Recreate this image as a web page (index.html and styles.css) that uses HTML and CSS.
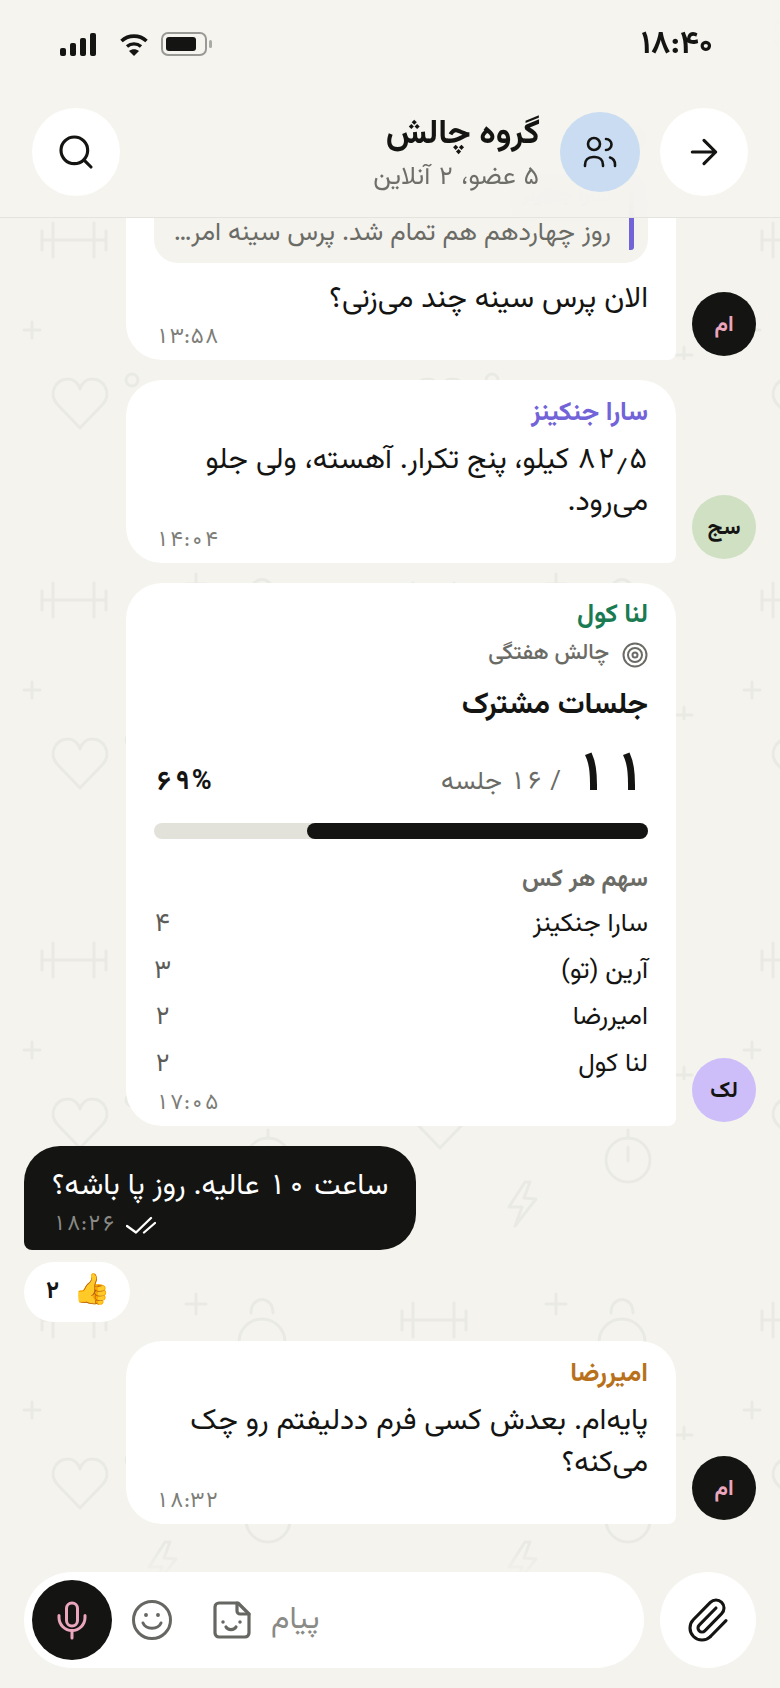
FILE: index.html
```html
<!DOCTYPE html>
<html lang="fa" dir="rtl">
<head>
    <meta charset="UTF-8">
    <meta name="viewport" content="width=device-width, initial-scale=1.0">
    <title>گروه چالش</title>
    <link rel="stylesheet" href="styles.css">
</head>
<body>
    <div class="screen">
        <!-- faint gym doodles behind the chat -->
        <svg class="doodles" width="780" height="1688" aria-hidden="true">
            <defs>
                <pattern id="tile" width="360" height="360" patternUnits="userSpaceOnUse">
                    <g fill="none" stroke="#eaeae4" stroke-width="3" stroke-linecap="round" stroke-linejoin="round">
                        <path d="M42 231v19M53 223v34M94 223v34M106 231v19M42 240h64"/>
                        <path d="M24 330h16M32 322v16M186 224h20M196 214v20M316 355h16M324 347v16"/>
                        <path d="M80 68 57 44C48 33 56 19 68 19c6 0 10 4 12 10 2-6 6-10 12-10 12 0 20 14 11 25z"/>
                        <circle cx="132" cy="20" r="6"/>
                        <circle cx="268" cy="80" r="22"/>
                        <path d="M268 58v-8M268 67v14"/>
                        <path d="M165 102 149 127h13l-7 19 21-27-12-1 6-16z"/>
                        <path d="M251 233c0-18 22-18 22 0"/>
                        <circle cx="262" cy="262" r="23"/>
                    </g>
                </pattern>
            </defs>
            <rect width="780" height="1688" fill="url(#tile)"/>
        </svg>

        <header class="topbar">
            <div class="status">
                <div class="status-icons">
                    <div class="signal">
                        <span class="s1"></span><span class="s2"></span><span class="s3"></span><span class="s4"></span>
                    </div>
                    <svg class="wifi" width="28" height="23" viewBox="0 0 28 23">
                        <path d="M1.5 8C8.5 1.5 19.5 1.5 26.5 8" fill="none" stroke="#141412" stroke-width="3.6"/>
                        <path d="M7 13.5c4-3.5 10-3.5 14 0" fill="none" stroke="#141412" stroke-width="3.4"/>
                        <path d="M14 23l-5-5c3-2.5 7-2.5 10 0z" fill="#141412"/>
                    </svg>
                    <div class="battery"><span class="battery-level"></span></div>
                    <span class="battery-cap"></span>
                </div>
                <span class="clock">۱۸:۴۰</span>
            </div>
            <div class="chat-head">
                <button class="round-btn">
                    <svg width="40" height="40" viewBox="0 0 24 24" fill="none" stroke="#141412" stroke-width="1.9" stroke-linecap="round" stroke-linejoin="round">
                        <path d="M5 12h14M12 5l7 7-7 7"/>
                    </svg>
                </button>
                <div class="group-pic">
                    <svg width="36" height="36" viewBox="0 0 36 36" fill="none" stroke="#141412" stroke-width="2.6" stroke-linecap="round">
                        <circle cx="12" cy="10" r="6"/>
                        <path d="M3 32v-1c0-5 3-8 8-8h2c5 0 8 3 8 8v1"/>
                        <path d="M24 5a5.5 5.5 0 0 1 0 11"/>
                        <path d="M28 23.5c3 1 5 3.5 5 7V32"/>
                    </svg>
                </div>
                <div class="chat-title">
                    <h1>گروه چالش</h1>
                    <p>۵ عضو، ۲ آنلاین</p>
                </div>
                <button class="round-btn search-btn">
                    <svg width="40" height="40" viewBox="0 0 24 24" fill="none" stroke="#141412" stroke-width="1.9" stroke-linecap="round">
                        <circle cx="11" cy="11" r="8"/>
                        <path d="M21 21l-4.3-4.3"/>
                    </svg>
                </button>
            </div>
        </header>

        <main class="messages">
            <div class="row">
                <div class="avatar av-dark">ام</div>
                <div class="bubble">
                    <div class="sender c-amir">امیررضا</div>
                    <div class="quote">
                        <div class="quote-body">
                            <div class="quote-name">سارا جنکینز</div>
                            <div class="quote-text">روز چهاردهم هم تمام شد. پرس سینه امر…</div>
                        </div>
                    </div>
                    <div class="text">الان پرس سینه چند می‌زنی؟</div>
                    <div class="time">۱۳:۵۸</div>
                </div>
            </div>

            <div class="row">
                <div class="avatar av-green">سج</div>
                <div class="bubble">
                    <div class="sender c-sara">سارا جنکینز</div>
                    <div class="text">۸۲٫۵ کیلو، پنج تکرار. آهسته، ولی جلو می‌رود.</div>
                    <div class="time">۱۴:۰۴</div>
                </div>
            </div>

            <div class="row">
                <div class="avatar av-purple">لک</div>
                <div class="bubble">
                    <div class="sender sender-card c-lena">لنا کول</div>
                    <div class="kicker">
                        <svg width="26" height="26" viewBox="0 0 26 26" fill="none" stroke="#6b6b66" stroke-width="2">
                            <circle cx="13" cy="13" r="11.5"/>
                            <circle cx="13" cy="13" r="7"/>
                            <circle cx="13" cy="13" r="2.5"/>
                        </svg>
                        <span>چالش هفتگی</span>
                    </div>
                    <div class="card-title">جلسات مشترک</div>
                    <div class="stats">
                        <div class="stats-count">
                            <span class="big-num">۱۱</span>
                            <span class="of-total">/ ۱۶ جلسه</span>
                        </div>
                        <span class="percent">۶۹%</span>
                    </div>
                    <div class="progress"><div class="progress-fill" style="width: 69%"></div></div>
                    <div class="share-title">سهم هر کس</div>
                    <div class="share-row"><span>سارا جنکینز</span><span class="share-num">۴</span></div>
                    <div class="share-row"><span>آرین (تو)</span><span class="share-num">۳</span></div>
                    <div class="share-row"><span>امیررضا</span><span class="share-num">۲</span></div>
                    <div class="share-row"><span>لنا کول</span><span class="share-num">۲</span></div>
                    <div class="time">۱۷:۰۵</div>
                </div>
            </div>

            <div class="mine">
                <div class="mine-text">ساعت ۱۰ عالیه. روز پا باشه؟</div>
                <div class="mine-meta">
                    <span>۱۸:۲۶</span>
                    <svg width="30" height="18" viewBox="0 0 30 18" fill="none" stroke="#fff" stroke-width="2.3" stroke-linecap="round" stroke-linejoin="round">
                        <path d="M1 10l9 6.5L25 2"/>
                        <path d="M18 16.5 29 7"/>
                    </svg>
                </div>
            </div>
            <div class="reaction"><span class="reaction-emoji">👍</span><b>۲</b></div>

            <div class="row">
                <div class="avatar av-dark">ام</div>
                <div class="bubble">
                    <div class="sender c-amir">امیررضا</div>
                    <div class="text">پایه‌ام. بعدش کسی فرم ددلیفتم رو چک می‌کنه؟</div>
                    <div class="time">۱۸:۳۲</div>
                </div>
            </div>
        </main>

        <footer class="composer">
            <button class="attach-btn">
                <svg width="48" height="48" viewBox="0 0 24 24" fill="none" stroke="#141412" stroke-width="1.55" stroke-linecap="round" stroke-linejoin="round">
                    <path d="M13.234 20.252 21 12.3"/>
                    <path d="m16 6-8.414 8.586a2 2 0 0 0 0 2.828 2 2 0 0 0 2.828 0l8.414-8.586a4 4 0 0 0 0-5.656 4 4 0 0 0-5.656 0l-8.415 8.585a6 6 0 1 0 8.486 8.486"/>
                </svg>
            </button>
            <div class="input-pill">
                <button class="mic-btn">
                    <svg width="40" height="40" viewBox="0 0 40 40" fill="none" stroke="#eba5bd" stroke-width="3" stroke-linecap="round">
                        <rect x="14.5" y="3" width="11" height="23" rx="5.5"/>
                        <path d="M7 15.5v2a13 13 0 0 0 26 0v-2"/>
                        <path d="M20 31v7"/>
                    </svg>
                </button>
                <svg class="smile" width="40" height="40" viewBox="0 0 40 40" fill="none" stroke="#666662" stroke-width="3" stroke-linecap="round">
                    <circle cx="20" cy="20" r="18.5"/>
                    <path d="M11 23c3 7 15 7 18 0"/>
                    <circle cx="14" cy="15" r="1.2" fill="#666662" stroke-width="1.5"/>
                    <circle cx="26" cy="15" r="1.2" fill="#666662" stroke-width="1.5"/>
                </svg>
                <svg class="sticker" width="38" height="38" viewBox="0 0 38 38" fill="none" stroke="#666662" stroke-width="3.2" stroke-linecap="round" stroke-linejoin="round">
                    <path d="M6 2h19l11 11v19a4 4 0 0 1-4 4H6a4 4 0 0 1-4-4V6a4 4 0 0 1 4-4z"/>
                    <path d="M24 2v8a3 3 0 0 0 3 3h9"/>
                    <path d="M13 26c2 3.5 8 3.5 10 0"/>
                    <circle cx="10" cy="21" r="1" fill="#666662" stroke-width="1.5"/>
                    <circle cx="27" cy="21" r="1" fill="#666662" stroke-width="1.5"/>
                </svg>
                <span class="placeholder">پیام</span>
            </div>
        </footer>
    </div>
</body>
</html>
```

FILE: styles.css
```css
* {
    box-sizing: border-box;
}

body {
    margin: 0;
    background-color: #f4f3ee;
    color: #141412;
    font-family: "Vazirmatn", "Noto Sans Arabic", sans-serif;
    font-variant-numeric: tabular-nums;
}

.screen {
    position: relative;
    width: 780px;
    height: 1688px;
    overflow: hidden;
    display: flex;
    flex-direction: column;
}

.doodles {
    position: absolute;
    top: 0;
    left: 0;
}

/* top bar, floats over the chat */
.topbar {
    position: absolute;
    top: 0;
    left: 0;
    width: 100%;
    height: 218px;
    z-index: 2;
    background: rgba(244, 243, 238, 0.94);
    backdrop-filter: blur(14px);
    border-bottom: 1px solid #e4e3dd;
}

.status {
    direction: ltr;
    height: 88px;
    display: flex;
    align-items: center;
    justify-content: space-between;
    padding: 0 67px 0 60px;
}

.status-icons {
    display: flex;
    align-items: center;
}

.signal {
    display: flex;
    align-items: flex-end;
    gap: 4px;
    height: 23px;
    margin-right: 24px;
}

.signal span {
    width: 6px;
    background: #141412;
    border-radius: 2px;
}

.s1 { height: 8px; }
.s2 { height: 13px; }
.s3 { height: 18px; }
.s4 { height: 23px; }

.wifi {
    margin-right: 13px;
}

.battery {
    width: 46px;
    height: 24px;
    border: 2px solid #999995;
    border-radius: 7px;
    padding: 3px;
}

.battery-level {
    display: block;
    width: 30px;
    height: 14px;
    background: #141412;
    border-radius: 3px;
}

.battery-cap {
    width: 3px;
    height: 8px;
    margin-left: 2px;
    background: #aaaaa6;
    border-radius: 2px;
}

.clock {
    padding-top: 2px;
    font-size: 32px;
    font-weight: 700;
    font-variant-numeric: normal;
    line-height: 1;
}

.chat-head {
    height: 88px;
    margin-top: 20px;
    padding: 0 32px;
    display: flex;
    align-items: center;
}

.round-btn {
    width: 88px;
    height: 88px;
    border: none;
    border-radius: 50%;
    background: #fff;
    padding: 0;
    display: flex;
    align-items: center;
    justify-content: center;
}

.search-btn {
    margin-right: auto;
}

.group-pic {
    width: 80px;
    height: 80px;
    margin: 0 20px;
    border-radius: 50%;
    background: #c9dcf1;
    display: flex;
    align-items: center;
    justify-content: center;
}

.chat-title {
    margin-top: 8px;
}

.chat-title h1 {
    margin: 0;
    font-size: 34px;
    font-weight: 700;
    line-height: 40px;
}

.chat-title p {
    margin: 3px 0 0;
    font-size: 26px;
    line-height: 40px;
    color: #6f6f6a;
}

/* messages stick to the bottom and get cut at the top */
.messages {
    position: relative;
    flex: 1;
    min-height: 0;
    overflow: hidden;
    display: flex;
    flex-direction: column;
    justify-content: flex-end;
    padding: 0 24px 24px;
}

.row {
    display: flex;
    align-items: flex-end;
    gap: 16px;
    margin-top: 20px;
}

.avatar {
    flex: none;
    width: 64px;
    height: 64px;
    margin-bottom: 4px;
    padding-top: 3px;
    border-radius: 50%;
    display: flex;
    align-items: center;
    justify-content: center;
    font-size: 22px;
    font-weight: 700;
}

.av-dark { background: #141412; color: #eba5bd; }
.av-green { background: #cfe0c3; color: #141412; }
.av-purple { background: #cdbdf9; color: #141412; }

.bubble {
    width: 550px;
    padding: 17px 28px 11px;
    background: #fff;
    border-radius: 36px 36px 8px 36px;
}

.sender {
    font-size: 26px;
    font-weight: 700;
    line-height: 34px;
    margin-bottom: 9px;
}

.sender-card {
    margin-top: -1px;
    margin-bottom: 6px;
}

.c-amir { color: #b8711a; }
.c-sara { color: #7263d8; }
.c-lena { color: #1a7a52; }

.text {
    font-size: 29.6px;
    line-height: 42px;
}

.time {
    margin-top: 6px;
    font-size: 22px;
    line-height: 22px;
    text-align: left;
    color: #7d7d78;
    padding-left: 1px;
}

.share-row + .time {
    margin-top: 9px;
}

.quote {
    margin-bottom: 16px;
    padding: 14px 14px 13px 16px;
    background: #f4f3ee;
    border-radius: 24px;
}

.quote-body {
    border-right: 5px solid #7263d8;
    border-radius: 3px;
    padding-right: 18px;
}

.quote-name {
    font-size: 20px;
    font-weight: 700;
    line-height: 36px;
    color: #7263d8;
}

.quote-text {
    padding-top: 4px;
    font-size: 26px;
    line-height: 32px;
    color: #6b6b66;
    white-space: nowrap;
}

.kicker {
    display: flex;
    align-items: center;
    gap: 13px;
    font-size: 22px;
    font-weight: 500;
    line-height: 28px;
    color: #6b6b66;
}

.kicker svg {
    margin-top: 3px;
}

.card-title {
    margin-top: 18px;
    font-size: 30px;
    font-weight: 700;
    line-height: 40px;
}

.stats {
    margin-top: 21px;
    display: flex;
    align-items: flex-end;
    justify-content: space-between;
}

.stats-count {
    display: flex;
    align-items: flex-end;
    gap: 11px;
}

.big-num {
    font-size: 56px;
    font-weight: 700;
    line-height: 60px;
}

.of-total {
    font-size: 26px;
    line-height: 36px;
    padding-bottom: 6px;
    color: #6b6b66;
}

.percent {
    font-size: 27px;
    font-weight: 700;
    line-height: 36px;
    padding: 0 0 6px 1px;
}

.progress {
    margin-top: 16px;
    height: 16px;
    background: #e2e2da;
    border-radius: 8px;
}

.progress-fill {
    height: 100%;
    background: #141412;
    border-radius: 8px;
}

.share-title {
    margin-top: 24px;
    font-size: 24px;
    font-weight: 700;
    line-height: 34px;
    color: #6b6b66;
}

.share-row {
    margin-top: 8px;
    height: 38.7px;
    display: flex;
    align-items: center;
    justify-content: space-between;
    font-size: 26px;
}

.share-num {
    color: #5c5c58;
}

.mine {
    align-self: flex-end;
    margin-top: 20px;
    padding: 19px 28px 12px;
    background: #141412;
    color: #fff;
    border-radius: 36px 36px 36px 8px;
}

.mine-text {
    font-size: 29.6px;
    line-height: 44px;
}

.mine-meta {
    direction: ltr;
    display: flex;
    align-items: center;
    gap: 10px;
    margin-top: 3px;
    font-size: 22px;
    line-height: 26px;
    color: #8a8a86;
}

.reaction {
    align-self: flex-end;
    margin-top: 12px;
    height: 60px;
    width: 106px;
    border-radius: 30px;
    background: #fff;
    display: flex;
    align-items: center;
    justify-content: center;
    gap: 12px;
}

.reaction + .row {
    margin-top: 19px;
}

.reaction-emoji {
    font-size: 30px;
    line-height: 1;
}

.reaction b {
    font-size: 24px;
}

.composer {
    position: relative;
    display: flex;
    align-items: center;
    gap: 16px;
    padding: 24px 24px 20px;
    background: linear-gradient(rgba(244, 243, 238, 0), #f4f3ee 32px);
}

.attach-btn {
    flex: none;
    width: 96px;
    height: 96px;
    border: none;
    border-radius: 50%;
    background: #fff;
    padding: 0;
    display: flex;
    align-items: center;
    justify-content: center;
}

.input-pill {
    flex: 1;
    direction: ltr;
    height: 96px;
    padding: 8px;
    border-radius: 48px;
    background: #fff;
    display: flex;
    align-items: center;
    gap: 20px;
}

.mic-btn {
    width: 80px;
    height: 80px;
    border: none;
    border-radius: 50%;
    background: #141412;
    padding: 0;
    display: flex;
    align-items: center;
    justify-content: center;
}

.sticker {
    margin-left: 21px;
}

.placeholder {
    direction: rtl;
    font-size: 31px;
    color: #8a8a86;
}
```
